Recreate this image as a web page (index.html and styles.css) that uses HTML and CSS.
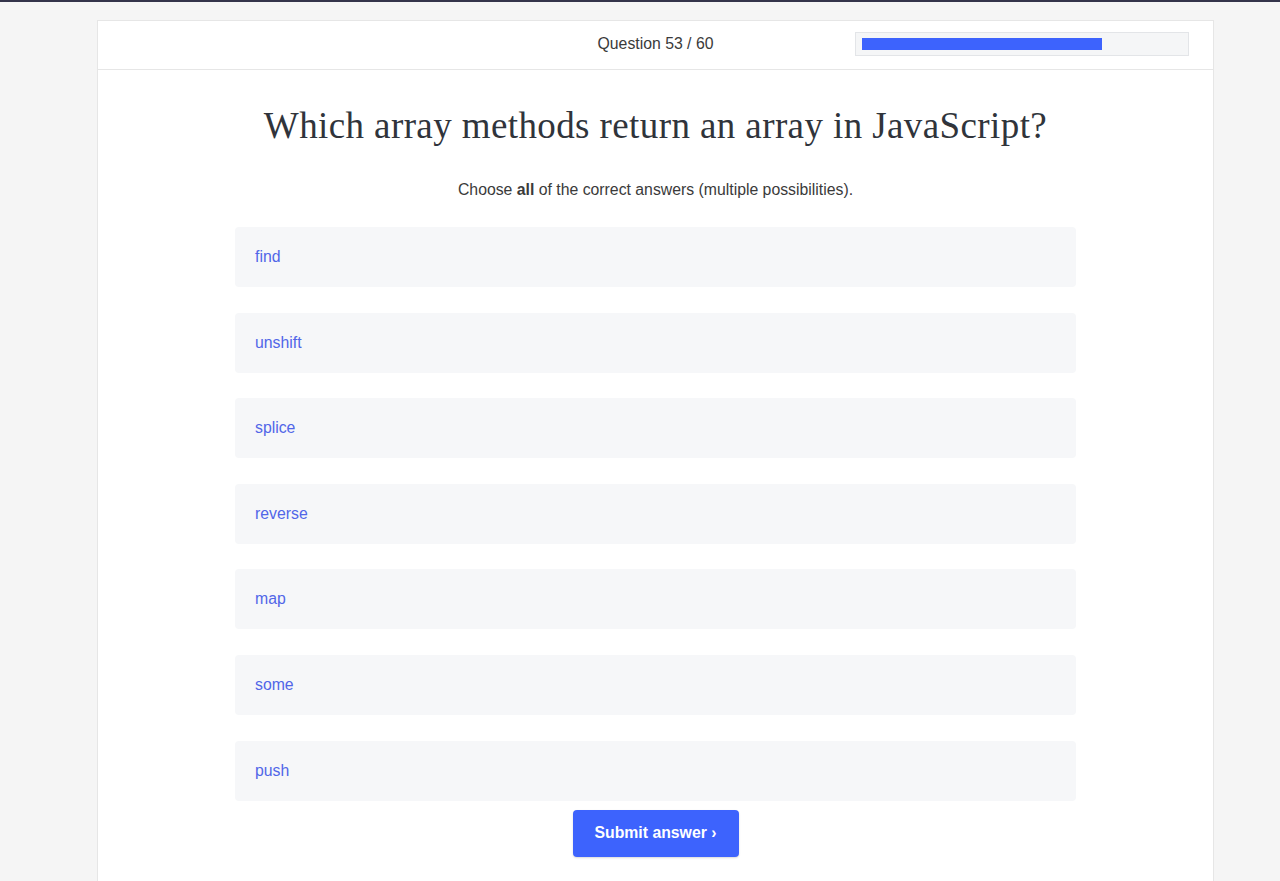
FILE: index.html
```html
<!DOCTYPE html>
<html lang="en">
<head>
<meta charset="utf-8">
<title>Quiz</title>
<link rel="stylesheet" href="styles.css">
</head>
<body>
<div class="topbar"></div>
<main class="card">
  <header class="card-head">
    <div class="head-spacer"></div>
    <div class="counter">Question 53 / 60</div>
    <div class="progress-wrap">
      <div class="progress"><div class="progress-fill" style="width:75%"></div></div>
    </div>
  </header>
  <section class="body">
    <h1 class="title">Which array methods return an array in JavaScript?</h1>
    <p class="hint">Choose <b>all</b> of the correct answers (multiple possibilities).</p>
    <ul class="options">
      <li class="option">find</li>
      <li class="option">unshift</li>
      <li class="option">splice</li>
      <li class="option">reverse</li>
      <li class="option">map</li>
      <li class="option">some</li>
      <li class="option">push</li>
    </ul>
    <button class="submit">Submit answer ›</button>
  </section>
</main>
</body>
</html>
```

FILE: styles.css
```css
html, body {
  margin: 0;
  padding: 0;
}
body {
  background: #f5f5f5;
  font-family: "Liberation Sans", Arial, sans-serif;
  color: #3a3a3a;
  height: 881px;
  overflow: hidden;
}
.topbar {
  height: 2px;
  background: #34344a;
}
.card {
  width: 1115px;
  margin: 18px 0 0 97px;
  background: #fff;
  border: 1px solid #e6e6e6;
  min-height: 900px;
}
.card-head {
  display: grid;
  grid-template-columns: 1fr auto 1fr;
  align-items: center;
  height: 48px;
  border-bottom: 1px solid #e6e6e6;
}
.counter {
  font-size: 15.8px;
  color: #3a3a3a;
  margin-top: -3px;
}
.progress-wrap {
  display: flex;
  justify-content: flex-end;
  padding-right: 24px;
  margin-top: -2px;
}
.progress {
  width: 320px;
  padding: 5px 6px;
  background: #f5f6f7;
  border: 1px solid #e3e5e8;
}
.progress-fill {
  height: 12px;
  background: #3d63fd;
}
.body {
  display: flex;
  flex-direction: column;
  align-items: center;
}
.title {
  font-family: "Liberation Serif", Georgia, serif;
  font-weight: normal;
  font-size: 37px;
  letter-spacing: 0.4px;
  color: #30343b;
  margin: 36px 0 0;
  line-height: 40px;
}
.hint {
  font-size: 15.8px;
  color: #3a3a3a;
  margin: 35px 0 0;
  line-height: 18px;
}
.hint b {
  font-weight: bold;
}
.options {
  list-style: none;
  margin: 28px 0 0;
  padding: 0;
  width: 841px;
  display: flex;
  flex-direction: column;
  gap: 25.6px;
}
.option {
  height: 60px;
  display: flex;
  align-items: center;
  padding-left: 20px;
  background: #f6f7f9;
  border-radius: 4px;
  color: #5166e8;
  font-size: 15.8px;
}
.submit {
  margin-top: 9px;
  width: 166px;
  height: 47px;
  border: none;
  border-radius: 4px;
  background: #3d63fd;
  color: #fff;
  font-family: "Liberation Sans", Arial, sans-serif;
  font-weight: bold;
  font-size: 15.8px;
  box-shadow: 0 1px 2px rgba(0,0,0,0.15);
}
```
